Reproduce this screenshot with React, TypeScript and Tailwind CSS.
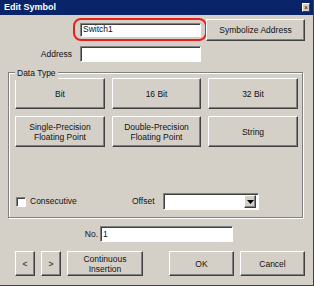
import type { ReactNode } from "react";

const raised =
  "border border-t-white border-l-white border-r-[#404040] border-b-[#404040] shadow-[inset_-1px_-1px_0_#808080] bg-[#d4d0c8]";
const sunken =
  "border border-t-[#808080] border-l-[#808080] border-r-white border-b-white shadow-[inset_1px_1px_0_#404040] bg-white";

function Btn({ className, children }: { className: string; children: ReactNode }) {
  return (
    <div className={`${raised} flex items-center justify-center text-center leading-[10px] ${className}`}>
      {children}
    </div>
  );
}

function Field({ className, value }: { className: string; value?: string }) {
  return (
    <div className={`${sunken} flex items-center pl-[2px] ${className}`}>
      {value}
    </div>
  );
}

export default function App() {
  return (
    <div
      className="flex h-[286px] w-[314px] flex-col border-r border-b border-[#404040] bg-[#d4d0c8] text-[8.5px] text-[#111]"
      style={{ fontFamily: '"Liberation Sans", Arial, sans-serif' }}
    >
      <div className="flex h-[15px] items-center justify-between bg-[#0a246a] pl-[4px] pr-[3px]">
        <span className="text-[9px] font-bold text-white">Edit Symbol</span>
        <div className="flex h-[9px] w-[8px] items-center justify-center border border-t-white border-l-white border-r-[#404040] border-b-[#404040] bg-[#d4d0c8] text-[7px] leading-none">
          ×
        </div>
      </div>

      <div className="mt-[3px] flex items-start pl-[73px]">
        <div className="flex h-[23px] w-[134px] items-center rounded-[8px] border-2 border-[#e8201c] pl-[5px]">
          <Field className="h-[14px] w-[121px]" value="Switch1" />
        </div>
        <Btn className="-ml-[1px] mt-[1px] h-[22px] w-[99px]">Symbolize Address</Btn>
      </div>

      <div className="mt-[5px] flex items-center">
        <span className="w-[72px] text-right">Address</span>
        <Field className="ml-[8px] h-[16px] w-[121px]" />
      </div>

      <div className="relative ml-[8px] mt-[10px] h-[146px] w-[295px] border border-[#808080] pl-[6px] pt-[5px] shadow-[inset_1px_1px_0_white,1px_1px_0_white]">
        <span className="absolute -top-[6px] left-[6px] bg-[#d4d0c8] px-[2px]">Data Type</span>
        <div className="grid grid-cols-[90px_89px_90px] grid-rows-[31px_31px] gap-[7px]">
          <Btn className="">Bit</Btn>
          <Btn className="">16 Bit</Btn>
          <Btn className="">32 Bit</Btn>
          <Btn className="">
            Single-Precision
            <br />
            Floating Point
          </Btn>
          <Btn className="">
            Double-Precision
            <br />
            Floating Point
          </Btn>
          <Btn className="">String</Btn>
        </div>
        <div className="mt-[46px] flex h-[17px] items-center">
          <div className={`${sunken} ml-[1px] h-[10px] w-[10px]`} />
          <span className="ml-[4px] w-[102px]">Consecutive</span>
          <span className="w-[31px]">Offset</span>
          <div className={`${sunken} flex h-[17px] w-[96px] items-center justify-end pr-[2px]`}>
            <div className={`${raised} flex h-[13px] w-[12px] items-center justify-center`}>
              <svg width="7" height="4" viewBox="0 0 7 4">
                <path d="M0 0h7L3.5 4z" fill="#000" />
              </svg>
            </div>
          </div>
        </div>
      </div>

      <div className="mt-[8px] flex items-center">
        <span className="w-[99px] pr-[1px] text-right">No.</span>
        <Field className="ml-[1px] h-[16px] w-[133px]" value="1" />
      </div>

      <div className="mt-[9px] flex pl-[15px]">
        <Btn className="h-[25px] w-[20px]">&lt;</Btn>
        <Btn className="ml-[6px] h-[25px] w-[20px]">&gt;</Btn>
        <Btn className="ml-[6px] h-[25px] w-[76px]">
          Continuous
          <br />
          Insertion
        </Btn>
        <Btn className="ml-[26px] h-[25px] w-[65px]">OK</Btn>
        <Btn className="ml-[6px] h-[25px] w-[65px]">Cancel</Btn>
      </div>
    </div>
  );
}
